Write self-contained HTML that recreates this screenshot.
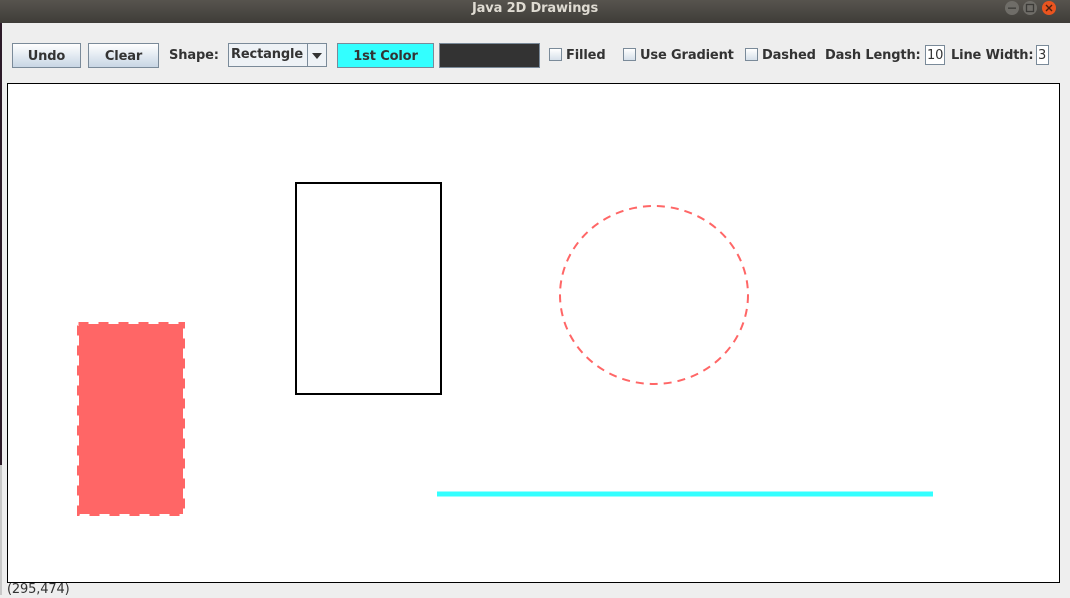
<!DOCTYPE html>
<html><head><meta charset="utf-8"><style>
*{margin:0;padding:0;box-sizing:border-box}
body{width:1070px;height:595px;overflow:hidden;background:#eeeeee;position:relative;font-family:"DejaVu Sans","Liberation Sans",sans-serif;font-weight:bold;font-size:13px;color:#333;letter-spacing:-0.15px}
#title{position:absolute;left:0;top:0;width:1070px;height:23px;background:linear-gradient(#57544e,#3e3c38);color:#dfdbd2;text-align:center;line-height:18px;font-size:13px}
.abs{position:absolute}
.btn{position:absolute;top:43px;height:25px;border:1px solid #7a8a99;background:linear-gradient(#ffffff,#dde6ef 60%,#c8d6e4);text-align:center;line-height:25px;color:#333}
.lbl{position:absolute;top:47px;line-height:18px}
.cb{position:absolute;top:48px;width:13px;height:13px;border:1px solid #7a8a99;background:linear-gradient(#fff,#d6e0ea)}
.tf{position:absolute;top:45px;height:20px;border:1px solid #7a8a99;background:#fff;font-weight:normal;line-height:19px;padding-left:1px}
</style></head><body>
<div class="abs" style="left:0;top:23px;width:2px;height:442px;background:#2c1a28"></div>
<div class="abs" style="left:0;top:465px;width:2px;height:130px;background:#c8c8c8"></div>
<div id="title">Java 2D Drawings</div>
<svg class="abs" style="left:1000px;top:0" width="70" height="18">
<circle cx="12" cy="8" r="7" fill="#6f6d68"/><rect x="8" y="7.5" width="8" height="1.3" fill="#3b3a37"/>
<circle cx="30" cy="8" r="7" fill="#6f6d68"/><rect x="26.5" y="4.5" width="7" height="7" fill="none" stroke="#3b3a37" stroke-width="1.3"/>
<circle cx="49" cy="8" r="7" fill="#e9541f"/><path d="M46 5l6 6M52 5l-6 6" stroke="#4a2010" stroke-width="1.4"/>
</svg>
<div class="btn" style="left:12px;width:69px">Undo</div>
<div class="btn" style="left:88px;width:71px">Clear</div>
<div class="lbl" style="left:169px">Shape:</div>
<div class="abs" style="left:228px;top:43px;width:99px;height:24px;border:1px solid #7a8a99;background:#eef2f6">
<div class="abs" style="left:2px;top:2px;line-height:18px">Rectangle</div>
<div class="abs" style="left:78px;top:0;width:1px;height:22px;background:#7a8a99"></div>
<svg class="abs" style="left:83px;top:9px" width="11" height="6"><path d="M0 0h10L5 6z" fill="#333"/></svg>
</div>
<div class="btn" style="left:337px;width:97px;background:#33ffff;border-color:#7a8a99">1st Color</div>
<div class="btn" style="left:439px;width:101px;background:#333333"></div>
<div class="cb" style="left:549px"></div><div class="lbl" style="left:566px">Filled</div>
<div class="cb" style="left:623px"></div><div class="lbl" style="left:640px">Use Gradient</div>
<div class="cb" style="left:745px"></div><div class="lbl" style="left:762px">Dashed</div>
<div class="lbl" style="left:825px">Dash Length:</div>
<div class="tf" style="left:925px;width:20px">10</div>
<div class="lbl" style="left:951px">Line Width:</div>
<div class="tf" style="left:1036px;width:13px">3</div>
<svg class="abs" style="left:7px;top:83px" width="1053" height="500">
<rect x="0.5" y="0.5" width="1052" height="499" fill="#fff" stroke="#000"/>
<rect x="289" y="100" width="145" height="211" fill="none" stroke="#000" stroke-width="2"/>
<ellipse cx="647" cy="212" rx="94" ry="89" fill="none" stroke="#ff6666" stroke-width="2" stroke-dasharray="8 6"/>
<rect x="72" y="241" width="104" height="190" fill="#ff6666"/>
<rect x="71.5" y="240.5" width="105" height="191" fill="none" stroke="#ff6666" stroke-width="3" stroke-dasharray="10 10"/>
<line x1="430" y1="411" x2="926" y2="411" stroke="#33ffff" stroke-width="5"/>
</svg>
<div class="abs" style="left:7px;top:582px;font-weight:normal;line-height:16px">(295,474)</div>
</body></html>
